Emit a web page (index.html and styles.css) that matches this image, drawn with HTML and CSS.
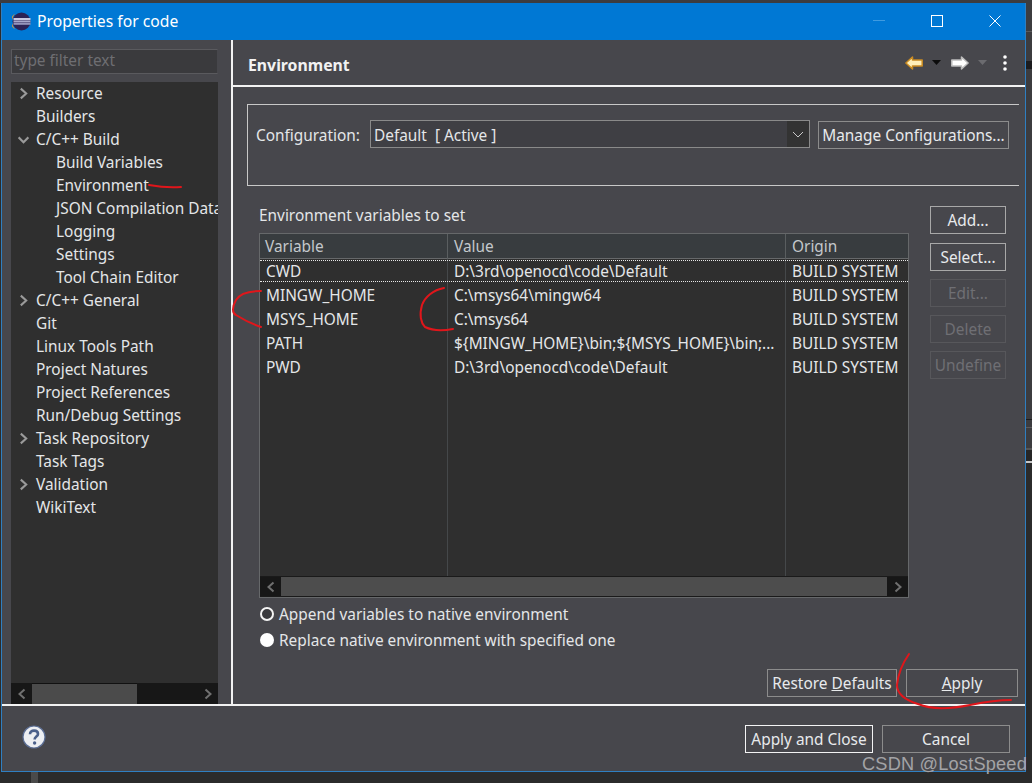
FILE: index.html
```html
<!DOCTYPE html>
<html lang="en">
<head>
<meta charset="utf-8">
<title>Properties for code</title>
<link rel="stylesheet" href="styles.css">
</head>
<body>
<div class="window">
  <header class="titlebar">
    <svg class="app-icon" width="19" height="19" viewBox="0 0 19 19">
      <circle cx="9.5" cy="9.5" r="9" fill="#2c2255"/>
      <path d="M3 1.8A9 9 0 0 0 3 17.2A11 11 0 0 1 3 1.8Z" fill="#f7941e"/>
      <rect x="1.5" y="6" width="17" height="2" fill="#c8c8e0"/>
      <rect x="1.5" y="8.4" width="17" height="2" fill="#a8a8cc"/>
      <rect x="1.5" y="10.8" width="17" height="2" fill="#9494bc"/>
    </svg>
    <span class="title-text">Properties for code</span>
    <div class="win-controls">
      <svg width="12" height="12" viewBox="0 0 12 12"><path d="M0 5.5H12" stroke="#3f9be0" stroke-width="1"/></svg>
      <svg width="12" height="12" viewBox="0 0 12 12"><rect x="0.5" y="0.5" width="11" height="11" fill="none" stroke="#fff"/></svg>
      <svg width="12" height="12" viewBox="0 0 12 12"><path d="M0.5 0.5L11.5 11.5M11.5 0.5L0.5 11.5" stroke="#fff" stroke-width="1"/></svg>
    </div>
  </header>
  <div class="body">
    <aside class="sidebar">
      <div class="filter">type filter text</div>
      <div class="tree">
        <ul class="tree-list">
          <li class="row"><svg class="chev" viewBox="0 0 10 12"><path d="M2.5 1.5L7.5 6L2.5 10.5" /></svg>Resource</li>
          <li class="row">Builders</li>
          <li class="row"><svg class="chev" viewBox="0 0 10 12"><path d="M0.5 4L5 8.5L9.5 4" /></svg>C/C++ Build</li>
          <li class="row child">Build Variables</li>
          <li class="row child">Environment</li>
          <li class="row child">JSON Compilation Database</li>
          <li class="row child">Logging</li>
          <li class="row child">Settings</li>
          <li class="row child">Tool Chain Editor</li>
          <li class="row"><svg class="chev" viewBox="0 0 10 12"><path d="M2.5 1.5L7.5 6L2.5 10.5" /></svg>C/C++ General</li>
          <li class="row">Git</li>
          <li class="row">Linux Tools Path</li>
          <li class="row">Project Natures</li>
          <li class="row">Project References</li>
          <li class="row">Run/Debug Settings</li>
          <li class="row"><svg class="chev" viewBox="0 0 10 12"><path d="M2.5 1.5L7.5 6L2.5 10.5" /></svg>Task Repository</li>
          <li class="row">Task Tags</li>
          <li class="row"><svg class="chev" viewBox="0 0 10 12"><path d="M2.5 1.5L7.5 6L2.5 10.5" /></svg>Validation</li>
          <li class="row">WikiText</li>
        </ul>
        <div class="hscroll dark">
          <span class="sb-btn"><svg viewBox="0 0 10 12"><path d="M7.5 1.5L2.5 6L7.5 10.5"/></svg></span>
          <span class="sb-thumb side-thumb"></span>
          <span class="sb-track"></span>
          <span class="sb-btn"><svg viewBox="0 0 10 12"><path d="M2.5 1.5L7.5 6L2.5 10.5"/></svg></span>
        </div>
      </div>
    </aside>
    <main class="panel">
      <div class="panel-head">
        <h1 class="panel-title">Environment</h1>
        <div class="nav-tools">
          <svg class="arrow" width="18" height="14" viewBox="0 0 18 14"><path d="M0.9 7L7.5 1V4H17.2V10H7.5V13Z" fill="#ffeeb8" stroke="#c98b22" stroke-width="1.5" stroke-linejoin="round"/></svg>
          <svg class="drop" width="9" height="5" viewBox="0 0 9 5"><path d="M0 0H9L4.5 5Z" fill="#0c0c0c"/></svg>
          <svg class="arrow" width="18" height="14" viewBox="0 0 18 14"><path d="M17.1 7L10.5 1V4H0.8V10H10.5V13Z" fill="#fff" stroke="#bdbdbd" stroke-width="1.5" stroke-linejoin="round"/></svg>
          <svg class="drop" width="9" height="5" viewBox="0 0 9 5"><path d="M0 0H9L4.5 5Z" fill="#6b6b6f"/></svg>
          <svg class="kebab" width="4" height="16" viewBox="0 0 4 16"><circle cx="2" cy="2" r="1.8" fill="#fff"/><circle cx="2" cy="8" r="1.8" fill="#fff"/><circle cx="2" cy="14" r="1.8" fill="#fff"/></svg>
        </div>
      </div>
      <div class="panel-body">
        <section class="config">
          <span class="config-label">Configuration:</span>
          <div class="combo"><span class="combo-value">Default  [ Active ]</span><span class="combo-arrow"><svg width="12" height="7" viewBox="0 0 12 7"><path d="M1 1L6 6L11 1" fill="none" stroke="#c8c8c8"/></svg></span></div>
          <button class="btn manage">Manage Configurations...</button>
        </section>
        <section class="env">
          <div class="env-left">
            <div class="env-label">Environment variables to set</div>
            <div class="table">
              <div class="thead">
                <span class="c1">Variable</span><span class="c2">Value</span><span class="c3">Origin</span>
              </div>
              <div class="tbody">
                <div class="tr first"><span class="c1">CWD</span><span class="c2">D:\3rd\openocd\code\Default</span><span class="c3">BUILD SYSTEM</span></div>
                <div class="tr"><span class="c1">MINGW_HOME</span><span class="c2">C:\msys64\mingw64</span><span class="c3">BUILD SYSTEM</span></div>
                <div class="tr"><span class="c1">MSYS_HOME</span><span class="c2">C:\msys64</span><span class="c3">BUILD SYSTEM</span></div>
                <div class="tr"><span class="c1">PATH</span><span class="c2">${MINGW_HOME}\bin;${MSYS_HOME}\bin;...</span><span class="c3">BUILD SYSTEM</span></div>
                <div class="tr"><span class="c1">PWD</span><span class="c2">D:\3rd\openocd\code\Default</span><span class="c3">BUILD SYSTEM</span></div>
              </div>
              <div class="hscroll light">
                <span class="sb-btn"><svg viewBox="0 0 10 12"><path d="M7.5 1.5L2.5 6L7.5 10.5"/></svg></span>
                <span class="sb-thumb table-thumb"></span>
                <span class="sb-btn"><svg viewBox="0 0 10 12"><path d="M2.5 1.5L7.5 6L2.5 10.5"/></svg></span>
              </div>
            </div>
          </div>
          <div class="env-buttons">
            <button class="btn side">Add...</button>
            <button class="btn side">Select...</button>
            <button class="btn side off">Edit...</button>
            <button class="btn side off">Delete</button>
            <button class="btn side off">Undefine</button>
          </div>
        </section>
        <div class="radios">
          <label class="radio"><span class="dot on"></span>Append variables to native environment</label>
          <label class="radio"><span class="dot"></span>Replace native environment with specified one</label>
        </div>
        <div class="panel-actions">
          <button class="btn restore">Restore <u>D</u>efaults</button>
          <button class="btn apply"><u>A</u>pply</button>
        </div>
      </div>
    </main>
  </div>
  <footer class="footer">
    <svg class="help" width="24" height="24" viewBox="0 0 24 24">
      <circle cx="12" cy="12" r="11" fill="#eceef2" stroke="#5a6d94" stroke-width="1.2"/>
      <path d="M8 9.2C8 6.8 9.8 5.6 12 5.6C14.4 5.6 16 6.9 16 8.9C16 11.6 12.6 11.6 12.6 14.6" fill="none" stroke="#4a5f8a" stroke-width="2.6"/>
      <circle cx="12.6" cy="18" r="1.7" fill="#4a5f8a"/>
    </svg>
    <button class="btn primary">Apply and Close</button>
    <button class="btn cancel">Cancel</button>
  </footer>
</div>
<div class="stem"></div>
<div class="backdrop-strip"></div>
<svg class="ink" width="1032" height="783" viewBox="0 0 1032 783">
  <g fill="none" stroke="#e0161b" stroke-width="2" stroke-linecap="round">
    <path d="M149 185C160 187 170 188 181 187"/>
    <path d="M261 291C250 291 240 293 236 300C232 307 232 313 236 315C244 320 252 324 261 327"/>
    <path d="M444 288C433 290 425 297 422 305C419 315 421 323 425 327C431 330 442 331 453 329"/>
    <path d="M909 654C902 664 898 675 897 685C897 694 905 700 918 704C932 710 950 709 970 705C985 702 998 700 1011 700"/>
  </g>
</svg>
<div class="watermark">CSDN @LostSpeed</div>
</body>
</html>
```
FILE: styles.css
```css
* { box-sizing: border-box; }
html, body { margin: 0; padding: 0; }
body {
  width: 1032px;
  height: 783px;
  overflow: hidden;
  background: linear-gradient(#3c3c3f 3px, #2b2b2b 3px);
  font-family: "Noto Sans", sans-serif;
  font-size: 15.4px;
  color: #e4e6e8;
  position: relative;
  padding: 3px 6px 0 1px;
}
.window {
  height: 769px;
  display: flex;
  flex-direction: column;
  background: #47474c;
  border-left: 1px solid #2f7fc1;
  border-right: 1px solid #2f7fc1;
  border-bottom: 1px solid #2f7fc1;
}
.titlebar {
  height: 37px;
  flex: none;
  background: #0078d4;
  display: flex;
  align-items: center;
  padding-left: 10px;
  color: #fff;
  font-size: 15.7px;
}
.app-icon { margin-right: 6px; }
.title-text { padding-bottom: 2px; }
.win-controls {
  margin-left: auto;
  display: flex;
  gap: 46px;
  padding-right: 24px;
  padding-bottom: 1px;
}
.body { flex: 1; display: flex; min-height: 0; }
.sidebar {
  width: 229px;
  flex: none;
  padding: 9px 13px 0 9px;
  display: flex;
  flex-direction: column;
}
.filter {
  height: 25px;
  flex: none;
  border: 1px solid #5a5a5e;
  border-right-color: #47474c;
  background: #3a3a3d;
  color: #6e6e72;
  line-height: 22px;
  padding-left: 2px;
  margin-bottom: 8px;
}
.tree {
  flex: 1;
  min-height: 0;
  background: #2f2f2f;
  display: flex;
  flex-direction: column;
  overflow: hidden;
}
.tree-list {
  flex: 1;
  list-style: none;
  margin: 0;
  padding: 0;
  min-height: 0;
  overflow: hidden;
}
.row {
  height: 23px;
  line-height: 23px;
  padding-left: 25px;
  white-space: nowrap;
  position: relative;
}
.row.child { padding-left: 45px; }
.chev {
  position: absolute;
  left: 7px;
  top: 5px;
  width: 11px;
  height: 13px;
  fill: none;
  stroke: #9a9a9a;
  stroke-width: 1.9;
}
.hscroll { height: 21px; flex: none; display: flex; align-items: stretch; }
.hscroll.dark { background: #171717; }
.hscroll.light { background: #1f1f1f; border-top: 1px solid #1a1a1a; border-bottom: 1px solid #1a1a1a; }
.sb-btn {
  width: 21px;
  flex: none;
  background: #171717;
  display: flex;
  align-items: center;
  justify-content: center;
}
.sb-btn svg { width: 10px; height: 12px; fill: none; stroke: #707070; stroke-width: 2; }
.sb-thumb { background: #4b4b4b; }
.side-thumb { width: 105px; border-top: 1px solid #111; }
.sb-track { flex: 1; }
.table-thumb { flex: 1; background: #4d4d4d; }
.panel {
  flex: 1;
  min-width: 0;
  display: flex;
  flex-direction: column;
  border-left: 2px solid #f2f2f2;
}
.panel-head {
  height: 47px;
  flex: none;
  display: flex;
  align-items: center;
  padding: 0 18px 0 15px;
  border-bottom: 2px solid #f2f2f2;
}
.panel-title { margin: 4px 0 0; font-size: 15.8px; font-weight: 700; color: #f2f2f2; }
.nav-tools { margin-left: auto; display: flex; align-items: center; gap: 9px; }
.drop + .arrow { margin-left: 1px; }
.kebab { margin-left: 7px; }
.panel-body {
  flex: 1;
  min-height: 0;
  display: flex;
  flex-direction: column;
  padding: 17px 6px 7px 14px;
}
.config {
  height: 82px;
  flex: none;
  border: solid #c8c8c8;
  border-width: 1px 0 1px 1px;
  display: flex;
  align-items: flex-start;
  padding: 15px 0 0 8px;
}
.config-label { line-height: 31px; width: 114px; flex: none; }
.combo {
  width: 440px;
  height: 28px;
  display: flex;
  background: #3c3c40;
  border: 1px solid #8a8a8a;
  line-height: 29px;
}
.combo-value { flex: 1; padding-left: 3px; white-space: pre; background: #3f3f44; }
.combo-arrow {
  width: 22px;
  background: #333;
  display: flex;
  align-items: center;
  justify-content: center;
}
.btn {
  font: inherit;
  color: #e8eaec;
  background: #47474c;
  border: 1px solid #8c8c8c;
  padding: 2px 0 0;
  line-height: 1;
  white-space: nowrap;
}
.manage { width: 191px; height: 28px; margin-left: 8px; margin-top: 1px; }
.env {
  flex: none;
  display: flex;
  padding: 20px 0 0 12px;
}
.env-left { width: 650px; flex: none; }
.env-label { height: 27px; line-height: 20px; }
.table {
  height: 365px;
  border: 1px solid #66686a;
  display: flex;
  flex-direction: column;
  background: #2f2f2f;
}
.thead {
  height: 25px;
  flex: none;
  display: grid;
  grid-template-columns: 188px 338px 1fr;
  background: #383c3f;
  border-bottom: 1px solid #66686a;
  color: #c4c8cc;
  line-height: 25px;
}
.thead span { padding-left: 5px; border-right: 1px solid #5a5e60; }
.thead .c2 { padding-left: 6px; }
.thead .c3 { border-right: 0; padding-left: 6px; }
.tbody {
  flex: 1;
  min-height: 0;
  padding-top: 1px;
  background:
    linear-gradient(#45484a, #45484a) 187px 0 / 1px 100% no-repeat,
    linear-gradient(#45484a, #45484a) 525px 0 / 1px 100% no-repeat,
    #2f2f2f;
}
.tr {
  height: 24px;
  display: grid;
  grid-template-columns: 188px 338px 1fr;
  line-height: 24px;
}
.tr span { padding-left: 6px; white-space: nowrap; overflow: hidden; }
.tr.first {
  height: 22px;
  margin-bottom: 2px;
  border-top: 1px dotted #e8e8e8;
  border-bottom: 1px dotted #e8e8e8;
}
.tr.first span { line-height: 21px; }
.env-buttons {
  flex: none;
  margin-left: 21px;
  display: flex;
  flex-direction: column;
  gap: 8px;
}
.side { width: 76px; height: 28px; border-color: #a8a8a8; }
.side:first-child { margin-bottom: 1px; }
.off { color: #6f6f74; border-color: #57575b; }
.radios {
  flex: none;
  padding: 3px 0 0 13px;
  display: flex;
  flex-direction: column;
}
.radio { display: flex; align-items: center; height: 26px; gap: 5px; }
.dot {
  width: 14px;
  height: 14px;
  border-radius: 50%;
  background: #fff;
  flex: none;
}
.dot.on { background: #3a3a3e; border: 2.5px solid #f4f4f4; }
.panel-actions {
  margin-top: auto;
  display: flex;
  justify-content: flex-end;
  gap: 9px;
  padding-right: 1px;
}
.restore { width: 130px; height: 28px; }
.apply { width: 112px; height: 28px; }
.footer {
  height: 67px;
  flex: none;
  border-top: 2px solid #f2f2f2;
  display: flex;
  align-items: flex-start;
  padding: 19px 0 0 20px;
}
.help { margin-right: auto; }
.primary { width: 128px; height: 28px; border-color: #f4f4f4; }
.cancel { width: 128px; height: 28px; margin: 0 15px 0 9px; }
.stem {
  position: absolute;
  left: 31px;
  top: 772px;
  width: 7px;
  height: 11px;
  background: #4a4a4a;
}
.backdrop-strip {
  position: absolute;
  left: 1026px;
  top: 0;
  width: 6px;
  height: 783px;
  background: linear-gradient(
    #3c3c3f 0 31px, #5a5a5c 31px 32px, #3c3c3f 32px 61px,
    #1c1c1e 61px 69px, #3c3c3f 69px 419px, #1c1c1c 419px 420px,
    #3c3c3f 420px 427px, #5a5a5c 427px 428px, #3c3c3f 428px 448px,
    #555 448px 450px, #262626 450px 461px, #c8c8c8 461px 463px, #2b2b2b 463px);
}
.ink { position: absolute; left: 0; top: 0; pointer-events: none; }
.watermark {
  position: absolute;
  right: 5px;
  top: 754px;
  font-family: "Liberation Sans", sans-serif;
  font-size: 18.2px;
  color: #a3a3a6;
  letter-spacing: 0.2px;
  white-space: nowrap;
}
```
